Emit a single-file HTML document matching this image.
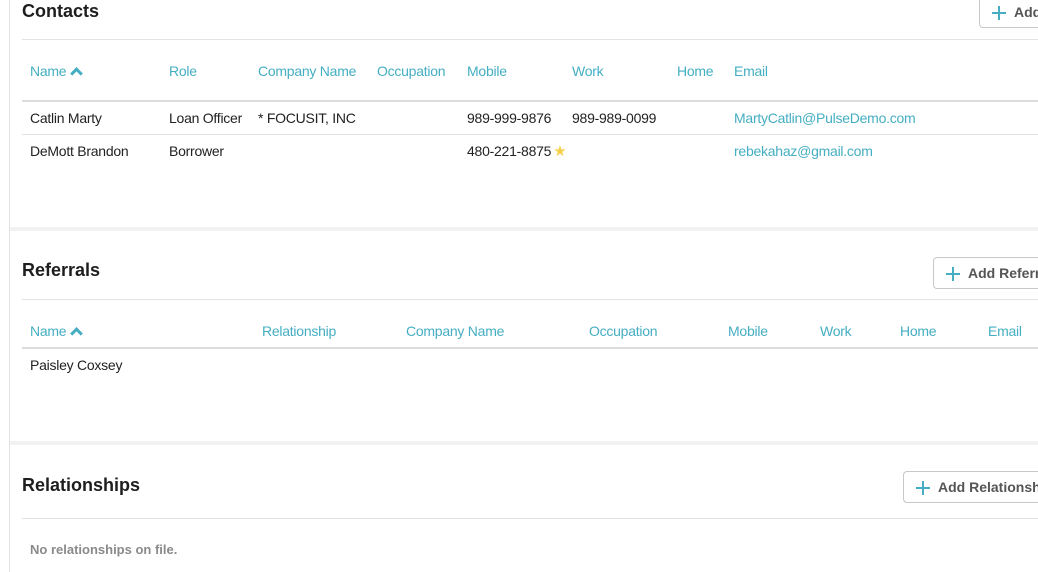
<!DOCTYPE html>
<html><head><meta charset="utf-8"><style>
*{margin:0;padding:0;box-sizing:border-box}
body{width:1038px;height:572px;overflow:hidden;background:#fff;position:relative;font-family:"Liberation Sans",sans-serif;font-size:14px;letter-spacing:-0.25px;color:#222}
.a{position:absolute;white-space:nowrap;line-height:20px}
.h{font-size:18px;font-weight:bold;color:#1e1e1e;line-height:22px;letter-spacing:0}
.t{color:#45aec2}
.l{position:absolute;left:22px;right:0;height:1px;background:#e3e3e3}
.th{position:absolute;left:22px;right:0;height:2px;background:#dcdcdc}
.band{position:absolute;left:10px;right:0;height:4px;background:#f2f2f2}
.btn{position:absolute;height:32px;border:1px solid #c8c8c8;border-radius:4px;border-right:none;border-top-right-radius:0;border-bottom-right-radius:0;right:0;font-weight:bold;color:#555;font-size:14px;letter-spacing:0;line-height:30px;padding-left:34px;overflow:hidden;white-space:nowrap}
.btn svg{position:absolute;left:11px;top:8px}
.car{display:inline-block;width:9px;height:9px;border-left:3px solid #45aec2;border-top:3px solid #45aec2;transform:rotate(45deg);margin-left:6px;position:relative;top:2px}
</style></head><body>
<div style="position:absolute;left:9px;top:0;width:1px;height:572px;background:#e2e2e2"></div>

<div class="a h" style="left:22px;top:0px">Contacts</div>
<div class="btn" style="left:979px;top:-4px"><svg width="16" height="16"><path d="M8 1v14M1 8h14" stroke="#45aec2" stroke-width="2"/></svg>Add Contact</div>
<div class="l" style="top:39px"></div>
<div class="a t" style="left:30px;top:61px">Name<span class="car"></span></div>
<div class="a t" style="left:169px;top:61px">Role</div>
<div class="a t" style="left:258px;top:61px">Company Name</div>
<div class="a t" style="left:377px;top:61px">Occupation</div>
<div class="a t" style="left:467px;top:61px">Mobile</div>
<div class="a t" style="left:572px;top:61px">Work</div>
<div class="a t" style="left:677px;top:61px">Home</div>
<div class="a t" style="left:734px;top:61px">Email</div>
<div class="th" style="top:100px"></div>
<div class="a" style="left:30px;top:108px">Catlin Marty</div>
<div class="a" style="left:169px;top:108px">Loan Officer</div>
<div class="a" style="left:258px;top:108px">* FOCUSIT, INC</div>
<div class="a" style="left:467px;top:108px">989-999-9876</div>
<div class="a" style="left:572px;top:108px">989-989-0099</div>
<div class="a t" style="left:734px;top:108px">MartyCatlin@PulseDemo.com</div>
<div class="l" style="top:134px"></div>
<div class="a" style="left:30px;top:141px">DeMott Brandon</div>
<div class="a" style="left:169px;top:141px">Borrower</div>
<div class="a" style="left:467px;top:141px">480-221-8875<span style="color:#f5d04a;font-size:15px;margin-left:2px">★</span></div>
<div class="a t" style="left:734px;top:141px">rebekahaz@gmail.com</div>

<div class="band" style="top:227px"></div>

<div class="a h" style="left:22px;top:259px">Referrals</div>
<div class="btn" style="left:933px;top:257px"><svg width="16" height="16"><path d="M8 1v14M1 8h14" stroke="#45aec2" stroke-width="2"/></svg>Add Referral</div>
<div class="l" style="top:299px"></div>
<div class="a t" style="left:30px;top:321px">Name<span class="car"></span></div>
<div class="a t" style="left:262px;top:321px">Relationship</div>
<div class="a t" style="left:406px;top:321px">Company Name</div>
<div class="a t" style="left:589px;top:321px">Occupation</div>
<div class="a t" style="left:728px;top:321px">Mobile</div>
<div class="a t" style="left:820px;top:321px">Work</div>
<div class="a t" style="left:900px;top:321px">Home</div>
<div class="a t" style="left:988px;top:321px">Email</div>
<div class="th" style="top:347px"></div>
<div class="a" style="left:30px;top:355px">Paisley Coxsey</div>

<div class="band" style="top:441px"></div>

<div class="a h" style="left:22px;top:474px">Relationships</div>
<div class="btn" style="left:903px;top:471px"><svg width="16" height="16"><path d="M8 1v14M1 8h14" stroke="#45aec2" stroke-width="2"/></svg>Add Relationship</div>
<div class="l" style="top:518px"></div>
<div class="a" style="left:30px;top:540px;font-size:13px;font-weight:bold;color:#8a8a8a;letter-spacing:0">No relationships on file.</div>
</body></html>
